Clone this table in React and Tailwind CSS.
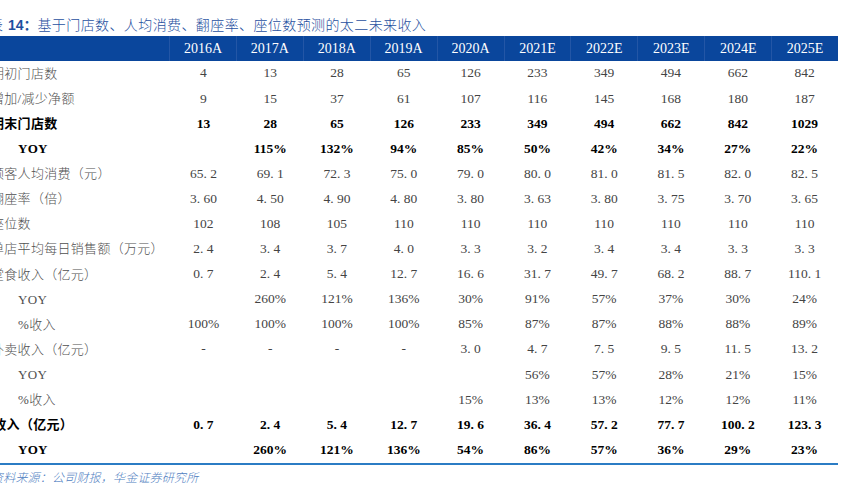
import React from "react";

const years = ["2016A","2017A","2018A","2019A","2020A","2021E","2022E","2023E","2024E","2025E"];

const rows = [
  { label: "期初门店数", vals: ["4","13","28","65","126","233","349","494","662","842"] },
  { label: "增加/减少净额", vals: ["9","15","37","61","107","116","145","168","180","187"] },
  { label: "期末门店数", bold: true, vals: ["13","28","65","126","233","349","494","662","842","1029"] },
  { label: "YOY", bold: true, indent: true, vals: ["","115%","132%","94%","85%","50%","42%","34%","27%","22%"] },
  { label: "顾客人均消费（元）", vals: ["65.2","69.1","72.3","75.0","79.0","80.0","81.0","81.5","82.0","82.5"] },
  { label: "翻座率（倍）", vals: ["3.60","4.50","4.90","4.80","3.80","3.63","3.80","3.75","3.70","3.65"] },
  { label: "座位数", vals: ["102","108","105","110","110","110","110","110","110","110"] },
  { label: "单店平均每日销售额（万元）", vals: ["2.4","3.4","3.7","4.0","3.3","3.2","3.4","3.4","3.3","3.3"] },
  { label: "堂食收入（亿元）", vals: ["0.7","2.4","5.4","12.7","16.6","31.7","49.7","68.2","88.7","110.1"] },
  { label: "YOY", indent: true, vals: ["","260%","121%","136%","30%","91%","57%","37%","30%","24%"] },
  { label: "%收入", indent: true, vals: ["100%","100%","100%","100%","85%","87%","87%","88%","88%","89%"] },
  { label: "外卖收入（亿元）", vals: ["-","-","-","-","3.0","4.7","7.5","9.5","11.5","13.2"] },
  { label: "YOY", indent: true, vals: ["","","","","","56%","57%","28%","21%","15%"] },
  { label: "%收入", indent: true, vals: ["","","","","15%","13%","13%","12%","12%","11%"] },
  { label: "总收入（亿元）", bold: true, total: true, vals: ["0.7","2.4","5.4","12.7","19.6","36.4","57.2","77.7","100.2","123.3"] },
  { label: "YOY", bold: true, indent: true, vals: ["","260%","121%","136%","54%","86%","57%","36%","29%","23%"] },
];

function fmt(v) {
  return v.replace(".", ". ");
}

export default function App() {
  return (
    <div className="w-[858px] h-[489px] bg-white overflow-hidden" style={{ fontFamily: '"Liberation Serif", "Noto Sans CJK SC", serif' }}>
      <div className="h-[36px] flex items-end pb-[2px]">
        <div className="-ml-[11px] text-[14px] leading-[18px] text-[#1f50a0] whitespace-nowrap" style={{ fontFamily: '"Liberation Sans", "Noto Sans CJK SC", sans-serif' }}>
          <span className="tracking-[0.5px] font-light">表 </span>
          <span className="font-bold">14：</span>
          <span className="tracking-[0.4px] font-light">基于门店数、人均消费、翻座率、座位数预测的太二未来收入</span>
        </div>
      </div>
      <div className="w-[838px]">
        <div className="flex h-[25px] bg-[#0a469c] text-white text-[14px]">
          <div className="w-[170px] shrink-0 border-r border-[#2356a6]"></div>
          {years.map((y, i) => (
            <div key={y} className={"flex-1 flex items-center justify-center " + (i < years.length - 1 ? "border-r border-[#2356a6]" : "")}>
              {y}
            </div>
          ))}
        </div>
        {rows.map((r, idx) => (
          <div key={idx} className={"flex h-[25.1px] items-center text-[13.5px] " + (r.bold ? "font-bold text-black" : "text-[#444444]")}>
            <div className={"w-[170px] shrink-0 whitespace-nowrap overflow-visible text-[13px] tracking-[0.3px] " + (r.bold ? "" : "font-light text-[#505050]")}>
              <span className={r.total ? "-ml-[20px] inline-block" : r.indent ? "ml-[18px] inline-block" : "-ml-[9px] inline-block"}>
                {r.label}
              </span>
            </div>
            {r.vals.map((v, i) => (
              <div key={i} className="flex-1 text-center whitespace-pre">
                {fmt(v)}
              </div>
            ))}
          </div>
        ))}
        <div className="h-[2px] bg-[#2b7cc4]"></div>
      </div>
      <div className="mt-[4px] -ml-[9px] text-[12px] leading-[16px] italic font-light tracking-[0.2px] text-[#4f80bf] whitespace-nowrap" style={{ fontFamily: '"Noto Sans CJK SC", sans-serif' }}>
        资料来源：公司财报，华金证券研究所
      </div>
    </div>
  );
}
